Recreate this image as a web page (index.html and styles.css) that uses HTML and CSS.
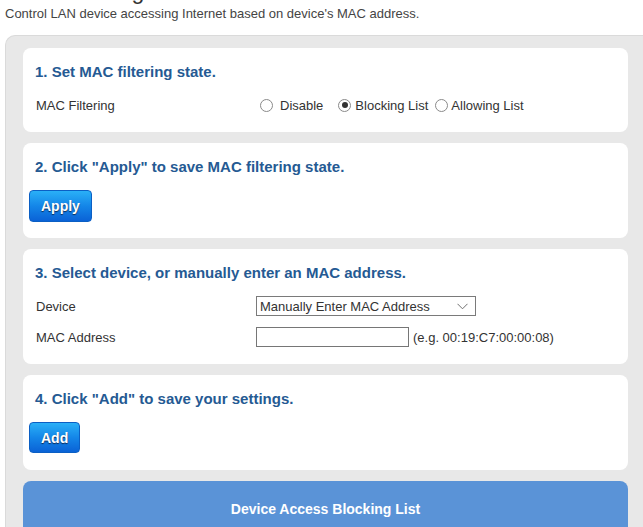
FILE: index.html
```html
<!DOCTYPE html>
<html lang="en">
<head>
    <meta charset="UTF-8">
    <meta name="viewport" content="width=device-width, initial-scale=1.0">
    <title>MAC Filtering</title>
    <link rel="stylesheet" href="styles.css">
</head>
<body>
    <div class="page">
        <h1>MAC Filtering</h1>
        <p class="desc">Control LAN device accessing Internet based on device's MAC address.</p>

        <div class="panel">
            <div class="card">
                <h2>1. Set MAC filtering state.</h2>
                <div class="row">
                    <span class="label">MAC Filtering</span>
                    <label class="opt opt-disable"><input type="radio" name="mode">Disable</label>
                    <label class="opt opt-block"><input type="radio" name="mode" checked>Blocking List</label>
                    <label class="opt opt-allow"><input type="radio" name="mode">Allowing List</label>
                </div>
            </div>

            <div class="card card-apply">
                <h2>2. Click "Apply" to save MAC filtering state.</h2>
                <button type="button" class="btn">Apply</button>
            </div>

            <div class="card">
                <h2>3. Select device, or manually enter an MAC address.</h2>
                <div class="row">
                    <span class="label">Device</span>
                    <div class="select-wrap">
                        <select>
                            <option>Manually Enter MAC Address</option>
                        </select>
                        <svg class="chevron" width="11" height="7" viewBox="0 0 11 7">
                            <path d="M0.5 0.8 L5.5 5.8 L10.5 0.8" fill="none" stroke="#707070" stroke-width="1"/>
                        </svg>
                    </div>
                </div>
                <div class="row row-gap">
                    <span class="label">MAC Address</span>
                    <input type="text" class="mac">
                    <span class="hint">(e.g. 00:19:C7:00:00:08)</span>
                </div>
            </div>

            <div class="card">
                <h2>4. Click "Add" to save your settings.</h2>
                <button type="button" class="btn btn-add">Add</button>
            </div>

            <div class="list-head">Device Access Blocking List</div>
        </div>
    </div>
</body>
</html>
```

FILE: styles.css
```css
* {
    margin: 0;
    padding: 0;
    box-sizing: border-box;
}

body {
    font-family: "Liberation Sans", Arial, sans-serif;
    font-size: 13px;
    color: #333;
    background-color: #ffffff;
    overflow: hidden;
}

.page {
    padding-left: 5px;
}

h1 {
    margin-top: -20px;
    font-size: 23px;
    line-height: 23px;
    font-weight: normal;
    color: #333;
}

.desc {
    margin-top: 3px;
    line-height: 16px;
    color: #444;
}

.panel {
    margin-top: 13px;
    background-color: #e8e8e8;
    border: 1px solid #dadada;
    border-right: none;
    border-radius: 10px 0 0 0;
    padding: 12px 15px 0 17px;
}

.card {
    background-color: #fff;
    border-radius: 8px;
    padding: 15px 12px 17px 12px;
    margin-bottom: 11px;
}

.card-apply {
    padding-bottom: 16px;
}

.card h2 {
    font-size: 15px;
    line-height: 18px;
    font-weight: bold;
    color: #255a93;
    margin-bottom: 14px;
}

.row {
    display: flex;
    align-items: center;
    height: 20px;
}

.row-gap {
    margin-top: 11px;
}

.label {
    width: 221px;
    flex-shrink: 0;
    padding-left: 1px;
}

.opt {
    display: flex;
    align-items: center;
    white-space: nowrap;
}

.opt input {
    appearance: none;
    width: 13px;
    height: 13px;
    border: 1px solid #8a8a8a;
    border-radius: 50%;
    background: #fff;
    position: relative;
}

.opt input:checked::after {
    content: "";
    position: absolute;
    left: 2.5px;
    top: 2.5px;
    width: 6px;
    height: 6px;
    border-radius: 50%;
    background: #333;
}

.opt-disable input {
    margin: 0 7px 0 4px;
}

.opt-block {
    margin-left: 15px;
}

.opt-block input {
    margin-right: 4px;
}

.opt-allow {
    margin-left: 7px;
}

.opt-allow input {
    margin-right: 3px;
}

.btn {
    display: block;
    margin-left: -6px;
    height: 32px;
    padding: 0 11px;
    border: 1px solid #0b5fc4;
    border-radius: 4px;
    background: linear-gradient(to bottom, #2ab0f7 0%, #1486e8 50%, #0a62d6 100%);
    color: #fff;
    font-family: inherit;
    font-size: 14px;
    font-weight: bold;
    text-shadow: 0 1px 1px #0b2a55;
    cursor: pointer;
}

.btn-add {
    height: 31px;
}

.select-wrap {
    position: relative;
    width: 220px;
    height: 20px;
}

.select-wrap select {
    appearance: none;
    width: 100%;
    height: 20px;
    border: 1px solid #7a7a7a;
    border-radius: 0;
    background: #fff;
    font-family: inherit;
    font-size: 13px;
    color: #333;
    padding: 0 0 0 3px;
}

.chevron {
    position: absolute;
    right: 8px;
    top: 7px;
    pointer-events: none;
}

.mac {
    width: 153px;
    height: 20px;
    border: 1px solid #767676;
    border-radius: 0;
    font-family: inherit;
    font-size: 13px;
}

.hint {
    margin-left: 4px;
}

.list-head {
    background-color: #5a93d7;
    border-radius: 8px 8px 0 0;
    height: 60px;
    padding-top: 20px;
    text-align: center;
    color: #fff;
    font-size: 14px;
    font-weight: bold;
}
```
